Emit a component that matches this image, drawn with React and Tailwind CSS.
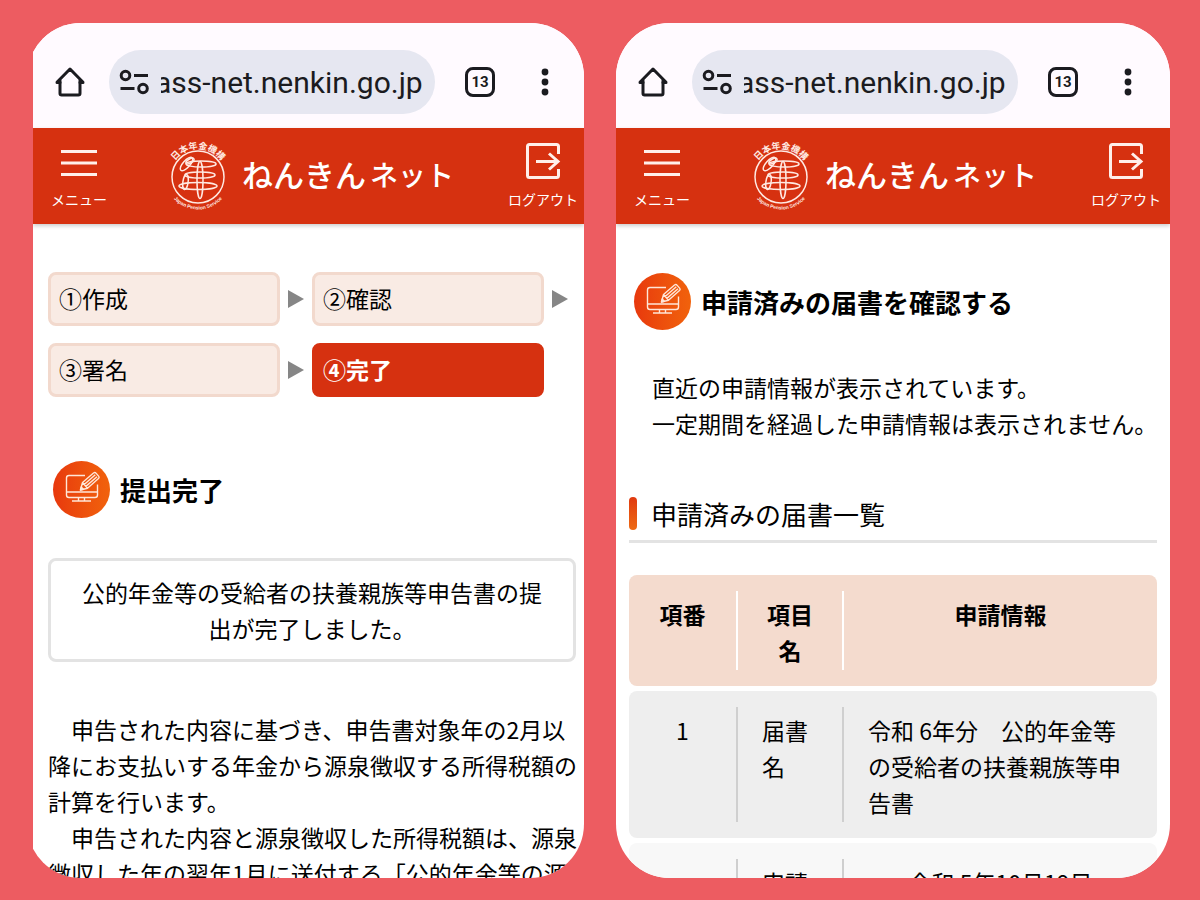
import { useState } from "react";

const stepBase = "h-[54px] flex items-center rounded-lg border-3 px-2 pb-0.5 text-[23px]";

function HomeIcon() {
  return (
    <svg viewBox="0 0 30 30" className="w-[30px] h-[30px]" fill="none" stroke="#1b1b20" strokeWidth="3" strokeLinejoin="round" strokeLinecap="round">
      <path d="M2 15.500H5M25 15.500H28M2.200 15 15 2l12.800 13" />
      <path d="M5 13.500V26.300Q5 28 6.700 28H23.300Q25 28 25 26.300V13.500" />
    </svg>
  );
}

function TuneIcon() {
  return (
    <svg viewBox="0 0 30 26" className="w-[30px] h-[26px] shrink-0" fill="none" stroke="#1b1b20" strokeWidth="3">
      <circle cx="6.500" cy="6.500" r="4.300" />
      <path d="M15 6.500h14M1.500 19.500h14" />
      <circle cx="24" cy="19.500" r="4.300" />
    </svg>
  );
}

function BrowserBar() {
  const [url, setUrl] = useState("ass-net.nenkin.go.jp");

  return (
    <div className="flex items-center pt-[27px] pb-[14px] pl-[22px] bg-[#fffaff]">
      <button aria-label="ホーム" className="shrink-0">
        <HomeIcon />
      </button>
      <div className="ml-6 w-[326px] h-16 flex items-center pl-[10px] pr-3 rounded-full bg-[#e6e7f1]">
        <TuneIcon />
        <input
          aria-label="アドレス"
          value={url}
          onChange={(e) => setUrl(e.target.value)}
          className="ml-3 min-w-0 flex-1 pt-0.5 -indent-[6px] text-[30px] leading-10 text-[#1b1b20] font-[Roboto,sans-serif] outline-none"
        />
      </div>
      <button
        aria-label="タブ"
        className="ml-[30px] w-[30px] h-[30px] shrink-0 rounded-lg border-3 border-[#1b1b20] text-[15px] leading-6 font-bold text-[#1b1b20] font-[Roboto,sans-serif]"
      >
        13
      </button>
      <button aria-label="その他" className="ml-[46px] shrink-0">
        <svg viewBox="0 0 8 28" className="w-2 h-7" fill="#1b1b20">
          <circle cx="4" cy="4" r="3.400" />
          <circle cx="4" cy="14" r="3.400" />
          <circle cx="4" cy="24" r="3.400" />
        </svg>
      </button>
    </div>
  );
}

// Round seal with the organisation name set around it
function Seal({ id }) {
  return (
    <svg viewBox="0 0 60 72" className="w-[60px] h-[72px] shrink-0 overflow-visible" fill="none" stroke="#ffe9e2" strokeWidth="1.500">
      <defs>
        <path id={`${id}-top`} d="M2 37a28 28 0 0 1 56 0" />
        <path id={`${id}-bottom`} d="M-2.500 37a32.500 32.500 0 0 0 65 0" />
      </defs>
      <circle cx="30" cy="37" r="26" />
      <ellipse cx="33" cy="24" rx="15" ry="3" />
      <ellipse cx="32" cy="35" rx="15" ry="3" />
      <ellipse cx="30" cy="46" rx="19" ry="3.500" />
      <ellipse cx="32" cy="40" rx="3" ry="18.500" />
      <ellipse cx="18.500" cy="24" rx="8.500" ry="3.500" transform="rotate(-48 18.500 24)" />
      <ellipse cx="22" cy="21" rx="4.500" ry="2" transform="rotate(-30 22 21)" />
      <ellipse cx="17.500" cy="42" rx="2.600" ry="7.500" transform="rotate(8 17.500 42)" />
      <text stroke="none" fill="#ffe9e2" fontSize="9" fontWeight="700" textAnchor="middle">
        <textPath href={`#${id}-top`} startOffset="50%">日本年金機構</textPath>
      </text>
      <text stroke="none" fill="#ffe9e2" fontSize="5" fontWeight="700" fontFamily="Liberation Sans, sans-serif" textAnchor="middle">
        <textPath href={`#${id}-bottom`} startOffset="50%">Japan Pension Service</textPath>
      </text>
    </svg>
  );
}

function SiteHeader({ id }) {
  return (
    <header className="relative h-24 flex items-start pl-[18px] bg-[#d63110] text-white shadow-[0_2px_4px_rgba(0,0,0,0.2)]">
      <button className="pt-[21px] flex flex-col items-center shrink-0">
        <svg viewBox="0 0 36 28" className="w-9 h-7" stroke="#ffefea" strokeWidth="3">
          <path d="M0 2.500h36M0 14h36M0 25.500h36" />
        </svg>
        <span className="mt-[10px] text-[14px] leading-6">メニュー</span>
      </button>
      <a href="#top" className="ml-[61px] mt-3 flex items-center whitespace-nowrap">
        <Seal id={id} />
        <span className="ml-[14px] pb-1 text-[31px] leading-9 font-medium">ねんきん</span>
        <span className="ml-1 pb-1 text-[28px] leading-9 font-medium">ネット</span>
      </a>
      <button className="ml-[54px] pt-[14px] flex flex-col items-center shrink-0">
        <svg viewBox="0 0 36 38" className="w-9 h-[38px]" fill="none" stroke="#ffefea" strokeWidth="3">
          <path d="M33.500 12V4.500Q33.500 2.500 31.500 2.500H4.500Q2.500 2.500 2.500 4.500V33.500Q2.500 35.500 4.500 35.500H31.500Q33.500 35.500 33.500 33.500V27" />
          <path d="M11 19.500H33M24 11.500l9 8-9 8" />
        </svg>
        <span className="mt-[7px] text-[14px] leading-6">ログアウト</span>
      </button>
    </header>
  );
}

function Phone({ id, bleed, children }) {
  return (
    <div className="h-full overflow-hidden">
      <div className={`h-full overflow-hidden rounded-[54px] bg-white ${bleed ? "-ml-[6px] pl-[6px]" : ""}`}>
        <BrowserBar />
        <SiteHeader id={id} />
        {children}
      </div>
    </div>
  );
}

function PageTitle({ children }) {
  return (
    <h1 className="ml-[5px] flex items-center gap-[10px] text-[26px] font-bold">
      <span className="w-[57px] h-[57px] shrink-0 rounded-full bg-linear-to-r from-[#e8380d] to-[#f1620c]">
        <svg viewBox="0 0 57 57" className="w-full h-full" fill="none" stroke="#ffe6d8" strokeWidth="1.400" strokeLinejoin="round">
          <path d="M32 14.500H16Q13.500 14.500 13.500 17V34Q13.500 36.500 16 36.500H42Q44.500 36.500 44.500 34V23.500" />
          <path d="M13.500 31H44.500M25.500 36.500V39.500M31.500 36.500V39.500M19 40H38" />
          <path d="M29.500 21.500 40.500 12Q42 11 43.200 12.400L45.800 15.400Q46.600 16.600 45.500 17.600L34.500 27.300 27.500 29ZM29.500 21.500l5 5.800M31.200 23.500 42.300 13.800M32.900 25.400 44 15.700" />
          <path d="M27.500 29l.7-3 2.200 2.300z" fill="#ffe6d8" />
        </svg>
      </span>
      {children}
    </h1>
  );
}

function Arrow() {
  return (
    <svg viewBox="0 0 16 18" className="w-4 h-[18px] self-center" fill="#868686" aria-hidden="true">
      <path d="M0 0 16 9 0 18z" />
    </svg>
  );
}

function Steps() {
  const idle = `${stepBase} border-[#f2d9cd] bg-[#f9ebe4]`;
  const current = `${stepBase} border-[#d63110] bg-[#d63110] text-white font-bold`;

  return (
    <div className="mr-2 grid grid-cols-[1fr_16px_1fr_16px] gap-x-2 gap-y-[17px]">
      <div className={idle}>①作成</div>
      <Arrow />
      <div className={idle}>②確認</div>
      <Arrow />
      <div className={idle}>③署名</div>
      <Arrow />
      <div className={current} aria-current="step">④完了</div>
    </div>
  );
}

function SubmitDone() {
  return (
    <main className="pt-12 pl-[15px] pr-2">
      <Steps />
      <div className="mt-16">
        <PageTitle>提出完了</PageTitle>
      </div>

      {/* Result message */}
      <p className="mt-10 py-[13px] rounded-lg border-3 border-[#e3e3e3] text-center text-[23px] leading-9">
        公的年金等の受給者の扶養親族等申告書の提
        <br />
        出が完了しました。
      </p>

      {/* Notes */}
      <div className="mt-[49px] text-[23px] leading-9 whitespace-nowrap">
        <p className="indent-[23px]">
          申告された内容に基づき、申告書対象年の2月以
          <br />
          降にお支払いする年金から源泉徴収する所得税額の
          <br />
          計算を行います。
        </p>
        <p className="indent-[23px]">
          申告された内容と源泉徴収した所得税額は、源泉
          <br />
          徴収した年の翌年1月に送付する「公的年金等の源
        </p>
      </div>
    </main>
  );
}

function Cell({ as: Tag = "td", className = "", line = "border-[#cfcfcf]", last, children }) {
  return (
    <Tag className={`h-px py-4 align-top ${className}`}>
      <div className={`h-full px-6 pt-[5px] pb-[2px] ${last ? "" : `border-r-2 ${line}`}`}>{children}</div>
    </Tag>
  );
}

function SubmittedList() {
  return (
    <main className="pt-[49px] px-[13px]">
      <PageTitle>申請済みの届書を確認する</PageTitle>
      <p className="mt-[39px] ml-[23px] text-[23px] leading-9 whitespace-nowrap">
        直近の申請情報が表示されています。
        <br />
        一定期間を経過した申請情報は表示されません。
      </p>

      <h2 className="mt-14 pb-[10px] flex items-center gap-[14px] border-b-3 border-[#e3e3e3] text-[26px] leading-8">
        <span className="w-2 h-[33px] rounded-full bg-linear-to-b from-[#e0380f] to-[#ee6a14]" />
        申請済みの届書一覧
      </h2>

      <table className="mt-[27px] w-full table-fixed border-separate border-spacing-x-0 border-spacing-y-[5px] text-[23px] leading-9">
        <colgroup>
          <col className="w-[109px]" />
          <col className="w-[106px]" />
          <col />
        </colgroup>
        <thead>
          <tr className="text-center">
            <Cell as="th" className="bg-[#f4dbce] rounded-l-lg" line="border-white">項番</Cell>
            <Cell as="th" className="bg-[#f4dbce]" line="border-white">項目名</Cell>
            <Cell as="th" className="bg-[#f4dbce] rounded-r-lg" last>申請情報</Cell>
          </tr>
        </thead>
        <tbody>
          <tr>
            <Cell className="bg-[#eeeeee] rounded-l-lg text-center">1</Cell>
            <Cell className="bg-[#eeeeee]">届書名</Cell>
            <Cell className="bg-[#eeeeee] rounded-r-lg" last>令和 6年分　公的年金等の受給者の扶養親族等申告書</Cell>
          </tr>
          <tr>
            <Cell className="bg-[#f8f8f8] rounded-l-lg" />
            <Cell className="bg-[#f8f8f8]">申請</Cell>
            <Cell className="bg-[#f8f8f8] rounded-r-lg text-center" last>令和 5年10月19日</Cell>
          </tr>
        </tbody>
      </table>
    </main>
  );
}

function App() {
  return (
    <div
      lang="ja"
      className="h-screen grid grid-cols-[551fr_554fr] grid-rows-[minmax(0,1fr)] gap-8 pt-[23px] pb-[22px] pl-[33px] pr-[30px] bg-[#ed5c61] text-black font-['Noto_Sans_CJK_JP',sans-serif]"
    >
      <Phone id="done" bleed>
        <SubmitDone />
      </Phone>
      <Phone id="list">
        <SubmittedList />
      </Phone>
    </div>
  );
}

export default App;
